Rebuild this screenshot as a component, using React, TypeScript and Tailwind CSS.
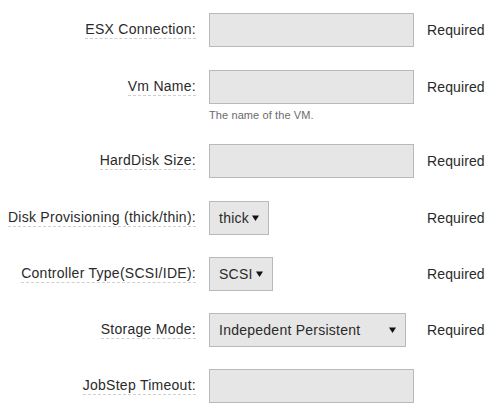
import React from 'react'

function Arrow() {
  return (
    <svg width="7" height="6" viewBox="0 0 7 6" className="shrink-0">
      <path d="M0 0.5 L7 0.5 L3.5 6 Z" fill="#111" />
    </svg>
  )
}

function Label({ text }: { text: string }) {
  return (
    <div className="w-[196px] shrink-0 flex justify-end">
      <span className="leading-[17px] tracking-[0.27px] border-b border-dashed border-[#cfcfcf]">{text}</span>
    </div>
  )
}

function TextBox() {
  return <div className="w-[205px] h-[34px] bg-[#e6e6e6] border border-[#b4babe]" />
}

function SelectBox({ value, width }: { value: string; width: string }) {
  return (
    <div className={`${width} h-[34px] bg-[#e6e6e6] border border-[#b4babe] flex items-center justify-between pl-[9px] pr-[9px]`}>
      <span className="leading-[16px] tracking-[0.25px]">{value}</span>
      <Arrow />
    </div>
  )
}

function Row({ label, control, required, className = '' }: { label: string; control: React.ReactNode; required?: boolean; className?: string }) {
  return (
    <div className={`flex items-center h-[34px] ${className}`}>
      <Label text={label} />
      <div className="ml-[13px] w-[205px] shrink-0">{control}</div>
      {required && <span className="ml-[13px] leading-[16px] tracking-[0.12px]">Required</span>}
    </div>
  )
}

export default function App() {
  return (
    <div className="w-[500px] h-[416px] bg-white pt-[13px] text-[14px] text-[#2a2a2a]" style={{ fontFamily: '"Liberation Sans", Arial, sans-serif' }}>
      <Row label="ESX Connection:" control={<TextBox />} required />
      <Row label="Vm Name:" control={<TextBox />} required className="mt-[23px]" />
      <div className="flex">
        <div className="ml-[209px] mt-[5px] text-[11px] leading-[13px] tracking-[0.1px] text-[#6b6b6b]">The name of the VM.</div>
      </div>
      <Row label="HardDisk Size:" control={<TextBox />} required className="mt-[22px]" />
      <Row label="Disk Provisioning (thick/thin):" control={<SelectBox value="thick" width="w-[60px]" />} required className="mt-[23px]" />
      <Row label="Controller Type(SCSI/IDE):" control={<SelectBox value="SCSI" width="w-[64px]" />} required className="mt-[22px]" />
      <Row label="Storage Mode:" control={<SelectBox value="Indepedent Persistent" width="w-[197px]" />} required className="mt-[22px]" />
      <Row label="JobStep Timeout:" control={<TextBox />} className="mt-[22px]" />
    </div>
  )
}
